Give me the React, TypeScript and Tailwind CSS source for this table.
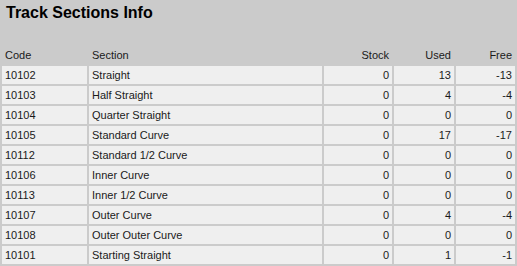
const rows = [
  { code: "10102", section: "Straight", stock: 0, used: 13, free: -13 },
  { code: "10103", section: "Half Straight", stock: 0, used: 4, free: -4 },
  { code: "10104", section: "Quarter Straight", stock: 0, used: 0, free: 0 },
  { code: "10105", section: "Standard Curve", stock: 0, used: 17, free: -17 },
  { code: "10112", section: "Standard 1/2 Curve", stock: 0, used: 0, free: 0 },
  { code: "10106", section: "Inner Curve", stock: 0, used: 0, free: 0 },
  { code: "10113", section: "Inner 1/2 Curve", stock: 0, used: 0, free: 0 },
  { code: "10107", section: "Outer Curve", stock: 0, used: 4, free: -4 },
  { code: "10108", section: "Outer Outer Curve", stock: 0, used: 0, free: 0 },
  { code: "10101", section: "Starting Straight", stock: 0, used: 1, free: -1 },
];

export default function App() {
  return (
    <div className="min-h-[266px] w-[517px] bg-[#cbcbcb] font-['Liberation_Sans',Arial,sans-serif] text-[#1a1a1a]">
      <h1 className="px-[6px] pt-[4px] text-[16px] font-bold leading-[18px] text-black">
        Track Sections Info
      </h1>

      <table className="mt-[22px] w-full table-fixed border-separate border-spacing-[2px] text-[11px] leading-[18px]">
        <thead>
          <tr>
            <th className="w-[85px] px-[3px] text-left font-normal">Code</th>
            <th className="w-[233px] px-[3px] text-left font-normal">Section</th>
            <th className="w-[68px] px-[3px] text-right font-normal">Stock</th>
            <th className="w-[60px] px-[3px] text-right font-normal">Used</th>
            <th className="px-[3px] text-right font-normal">Free</th>
          </tr>
        </thead>
        <tbody>
          {rows.map((r) => (
            <tr key={r.code}>
              <td className="h-[18px] bg-[#efefef] px-[3px]">{r.code}</td>
              <td className="bg-[#efefef] px-[3px]">{r.section}</td>
              <td className="bg-[#efefef] px-[3px] text-right">{r.stock}</td>
              <td className="bg-[#efefef] px-[3px] text-right">{r.used}</td>
              <td className="bg-[#efefef] px-[3px] text-right">{r.free}</td>
            </tr>
          ))}
        </tbody>
      </table>
    </div>
  );
}
